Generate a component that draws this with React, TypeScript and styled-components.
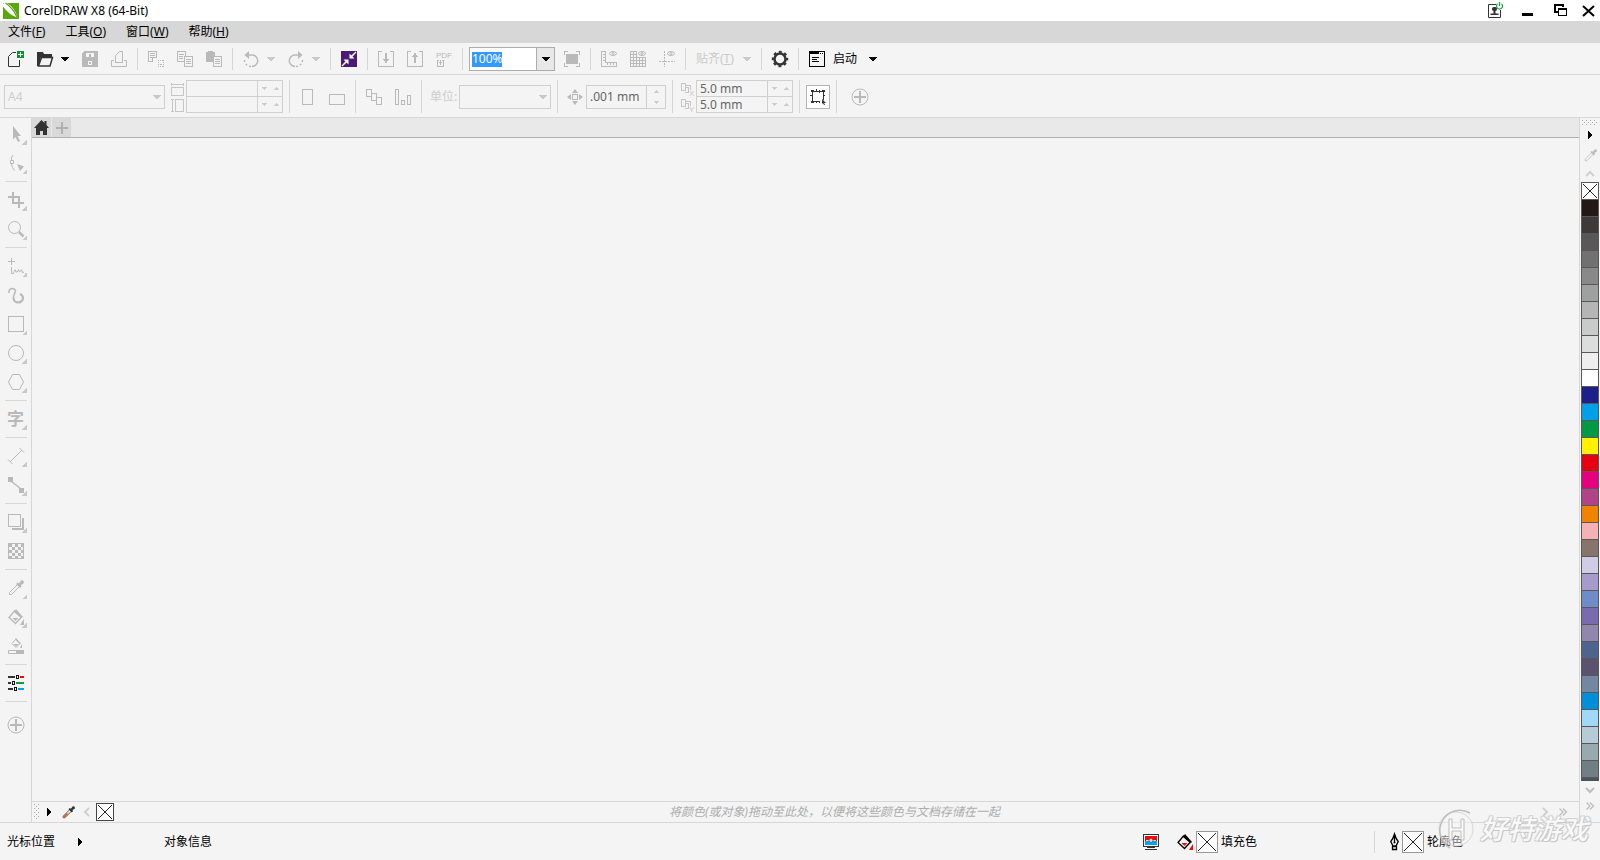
import React from 'react';
import styled, { createGlobalStyle, css } from 'styled-components';

const line = '#d7d7d7';
const face = '#f4f4f4';
const dim = '#b9b9b9';
const ink = '#333333';

const GlobalStyle = createGlobalStyle`
  * { box-sizing: border-box; }
  body { margin: 0; background: ${face}; }
  body, button, input, select {
    font-family: "Noto Sans", "Noto Sans CJK SC", sans-serif;
    font-size: 12px;
    line-height: 16px;
  }
  button { border: 0; padding: 0; margin: 0; background: none; color: inherit; }
  svg { display: block; flex: none; overflow: visible; }
`;

/* ---------- icons ---------- */

type IconProps = { children: React.ReactNode; w?: number; h?: number; soft?: boolean };

const Icon = ({ children, w = 16, h = 16, soft = false }: IconProps) => (
  <svg
    width={w}
    height={h}
    viewBox={`0 0 ${w} ${h}`}
    fill="none"
    stroke="currentColor"
    shapeRendering={soft ? 'auto' : 'crispEdges'}
    aria-hidden="true"
  >
    {children}
  </svg>
);

const solid = { fill: 'currentColor', stroke: 'none' };

const CaretDown = ({ small = false }: { small?: boolean }) =>
  small ? (
    <Icon w={5} h={3}><path {...solid} d="M0 0h5v1h-1v1h-1v1h-1v-1h-1v-1h-1z" /></Icon>
  ) : (
    <Icon w={8} h={4}><path {...solid} d="M0 0h8v1h-1v1h-1v1h-1v1h-2v-1h-1v-1h-1v-1h-1z" /></Icon>
  );
const CaretUp = () => (
  <Icon w={5} h={3}><path {...solid} d="M0 3h5v-1h-1v-1h-1v-1h-1v1h-1v1h-1z" /></Icon>
);
const CaretRight = () => (
  <Icon w={4} h={8}><path {...solid} d="M0 0h1v1h1v1h1v1h1v2h-1v1h-1v1h-1v1h-1z" /></Icon>
);

const Grip = ({ w, h }: { w: number; h: number }) => {
  const dots: React.ReactNode[] = [];
  for (let y = 0; y < h; y += 2) {
    for (let x = y % 4; x < w; x += 4) {
      dots.push(<rect key={`${x}-${y}`} x={x} y={y} width="1" height="1" fill="#a8a8a8" stroke="none" />);
    }
  }
  return <Icon w={w} h={h}>{dots}</Icon>;
};

const NewIcon = () => (
  <Icon>
    <path d="M8 1.5H4.5L.5 5.5V15.5H11.5V9" shapeRendering="auto" />
    <rect x="9" y="0" width="7" height="7" fill="#0a9132" stroke="none" />
    <path d="M12.5 1v5M10 3.5h5" stroke="#fff" />
  </Icon>
);
const OpenIcon = () => (
  <Icon soft>
    <path {...solid} d="M0 1h6l1 2h8v4h-2v-1h-9l-2 9h-2z" />
    <path d="M4.5 6.5H15.5L13 15H1.5Z" strokeWidth="1.5" fill={face} />
  </Icon>
);
const SaveIcon = () => (
  <Icon>
    <path {...solid} d="M2 0h14v16H0V2z" />
    <path d="M4 2h8v4H4zM6 10h4v4H6z" fill={face} stroke="none" />
    <path {...solid} d="M7 3h2v3H7z" />
    <path {...solid} d="M7 11h2v2H7z" />
  </Icon>
);
const PrintIcon = () => (
  <Icon>
    <path d="M4.5 11V4.5L8.5 .5H11.5V11M3 9.5H.5V15.5H15.5V9.5H13M4 11.5h8" shapeRendering="auto" />
  </Icon>
);
const CutIcon = () => (
  <Icon>
    <path d="M.5.5h8v6h-4v4h-4zM2 2.5h5M2 4.5h5M2 6.5h2" />
    <path d="M10 9.500h6M10 15.500h6M10.500 9v7M15.500 9v7" strokeDasharray="1 1" />
    <path d="M12 13.500h2" />
  </Icon>
);
const CopyIcon = () => (
  <Icon>
    <path d="M.5.5h8v10h-8zM2 3.5h5M2 5.5h4M2 7.5h4" />
    <path d="M7.5 5.5h8v10h-8z" fill={face} />
    <path d="M9 8.5h5M9 10.5h5M9 12.5h5" />
  </Icon>
);
const PasteIcon = () => (
  <Icon>
    <path {...solid} d="M0 1h2v-1h5v1h2v10H0z" />
    <path d="M7.5 5.5h8v10h-8z" fill={face} />
    <path d="M9 8.5h5M9 10.5h5M9 12.5h5" />
  </Icon>
);
const UndoIcon = () => (
  <Icon soft>
    <path d="M4 4H9A5.700 5.700 0 0 1 9 15.400" strokeWidth="1.500" />
    <path d="M8 15.400A6.500 6.500 0 0 1 1.500 8" strokeWidth="1.500" strokeDasharray="2 2" />
    <path {...solid} d="M6 0v8L1.500 4z" />
  </Icon>
);
const RedoIcon = () => (
  <Icon soft>
    <path d="M12 4H7A5.700 5.700 0 0 0 7 15.400" strokeWidth="1.500" />
    <path d="M8 15.400A6.500 6.500 0 0 0 14.500 8" strokeWidth="1.500" strokeDasharray="2 2" />
    <path {...solid} d="M10 0v8L14.500 4z" />
  </Icon>
);
const ConnectIcon = () => (
  <Icon soft>
    <rect width="16" height="16" fill="#4b1a77" stroke="none" />
    <path d="M1 15L6 10M15 1L10 6" stroke="#fff" strokeWidth="1.500" />
    <path d="M2.500 8.500H7.500V13.500ZM8.500 2.500V7.500H13.500Z" fill="#fff" stroke="none" />
  </Icon>
);
const ImportIcon = () => (
  <Icon>
    <path d="M4 .5H.5V15.5H15.5V.5H12" />
    <path {...solid} d="M7 2h2v6h2v1h-1v1h-1v2h-2v-2h-1v-1h-1v-1h2z" />
  </Icon>
);
const ExportIcon = () => (
  <Icon>
    <path d="M4 .5H.5V15.5H15.5V.5H12" />
    <path {...solid} d="M7 12h2V6h2V5h-1V4h-1V2h-2v2h-1v1h-1v1h2z" />
  </Icon>
);
const PdfIcon = () => (
  <Icon>
    <text x="0" y="7" {...solid} fontSize="8" fontFamily="Liberation Sans, sans-serif">PDF</text>
    <path d="M3 9.500H1.500V15.500H7.500V9.500H6M4.500 9v5M3 11.500h3" />
  </Icon>
);
const FullScreenIcon = () => (
  <Icon>
    <path {...solid} d="M2 3h12v10H2z" />
    <path d="M0 .5h4M.5 0v4M12 .5h4M15.500 0v4M0 15.500h4M.5 12v4M12 15.500h4M15.500 12v4" />
  </Icon>
);
const Eye = () => (
  <g shapeRendering="auto"><ellipse cx="12" cy="2.500" rx="3.500" ry="2" /><circle cx="12" cy="2.500" r="1" /></g>
);
const RulerIcon = () => (
  <Icon>
    <path d="M.5 .5H4.500V11.500H15.500V15.500H.5ZM2 3.500h2M2 6.500h2M2 9.500h2M6.500 12v2M9.500 12v2M12.500 12v2" />
    <Eye />
  </Icon>
);
const GridIcon = () => (
  <Icon>
    <path d="M.5 0v16M3.500 0v16M6.500 0v16M9.500 6v10M12.500 6v10M15.500 6v10M0 .5h7M0 3.500h7M0 6.500h16M0 9.500h16M0 12.500h16M0 15.500h16" />
    <Eye />
  </Icon>
);
const GuidesIcon = () => (
  <Icon>
    <path d="M5.500 0v16M0 10.500h16" strokeDasharray="2 1" />
    <Eye />
  </Icon>
);
const GearIcon = () => (
  <Icon soft>
    <circle cx="8" cy="8" r="5.500" strokeWidth="2.500" />
    <circle cx="8" cy="8" r="7.200" strokeWidth="2" strokeDasharray="2.830 2.830" strokeDashoffset="1.400" />
  </Icon>
);
const LaunchIcon = () => (
  <Icon>
    <path d="M.5.5h15v15h-15zM0 2.500h10M11 2.500h1M13 2.500h1M3 6.500h7M3 8.500h5M3 10.500h7" />
    <path d="M0 1.500h10" />
  </Icon>
);
const WidthIcon = () => (
  <Icon w={13} h={13}><path d="M0 1.500h13M.5 0v3M12.500 0v3M.5 4.500h12v8h-12z" /></Icon>
);
const HeightIcon = () => (
  <Icon w={13} h={13}><path d="M1.500 0v13M0 .5h3M0 12.500h3M4.500.5h8v12h-8z" /></Icon>
);
const PortraitIcon = () => <Icon><path d="M2.500.5h10v15h-10z" /></Icon>;
const LandscapeIcon = () => <Icon><path d="M.5 5.500h15v10h-15z" /></Icon>;
const PagesIcon = () => (
  <Icon>
    <path d="M.5.5h5v7h-5z" />
    <path d="M5.500 4.500h5v7h-5zM10.500 8.500h5v7h-5z" fill={face} />
  </Icon>
);
const PageSizesIcon = () => <Icon><path d="M.5.5h3v15h-3zM6.500 11.500h3v4h-3zM12.500 6.500h3v9h-3z" /></Icon>;
const NudgeIcon = () => (
  <Icon>
    <path d="M5.500 5.500h5v5h-5z" />
    <path {...solid} shapeRendering="auto" d="M8 0l3 4H5zM8 16l3-4H5zM0 8l4-3v6zM16 8l-4-3v6z" />
  </Icon>
);
const OffsetIcon = ({ axis }: { axis: string }) => (
  <Icon w={13} h={13}>
    <path d="M.5.5h4v7h-4zM5 2.500h4.500V7M4 9.500h3.500V4.500H5" />
    <text x="8" y="13" {...solid} fontSize="8" fontFamily="Liberation Sans, sans-serif">{axis}</text>
  </Icon>
);
const BoundsIcon = () => (
  <Icon>
    <path d="M2.500 2.500h11v8M10 12.500H2.500V2.500" />
    <path {...solid} d="M1 1h3v1h-1v1h-2zM12 1h3v2h-2v-1h-1zM1 12h2v1h1v1h-3zM6 0h1v2h-1zM9 1h1v3h-1zM6 12h1v2h-1zM9 12h1v2h-1zM0 6h2v1h-2zM13 6h2v1h-2z" />
    <path {...solid} shapeRendering="auto" d="M12 10l4 4h-2l1 2h-1l-1-2-1 1z" />
  </Icon>
);
const PlusCircleIcon = () => (
  <Icon w={18} h={18} soft>
    <circle cx="9" cy="9" r="8" />
    <path d="M9 3v12M3 9h12" strokeWidth="2" />
  </Icon>
);
const HomeIcon = () => (
  <Icon w={15} h={15} soft><path {...solid} d="M7.500 0l3 3v-2h2v4l2.500 3h-2v7H9v-4H6v4H2V8H0z" /></Icon>
);
const TabPlusIcon = () => <Icon w={12} h={12}><path d="M6 0v12M0 6h12" strokeWidth="2" /></Icon>;

const PickIcon = () => <Icon soft><path {...solid} d="M5 0L13 10H9.500L12 15L10 16L7.500 11L5 13.500Z" /></Icon>;
const ShapeIcon = () => (
  <Icon soft>
    <path d="M5 0Q3 2 3.500 5M3.500 9Q4 13 6.500 15.500" />
    <path d="M2.500 5.500h3v3h-3z" fill={face} />
    <path {...solid} d="M9 9L16 11.500L12 16Z" />
  </Icon>
);
const CropIcon = () => <Icon><path d="M5 0v11h11M0 5h11v11" strokeWidth="2" /></Icon>;
const ZoomIcon = () => (
  <Icon soft><circle cx="6.500" cy="6.500" r="6" /><path d="M11 11l4.500 4.500" strokeWidth="2.500" /></Icon>
);
const FreehandIcon = () => (
  <Icon soft>
    <path d="M3.500 0v7M0 3.500h7" />
    <path d="M3.500 9v6.500h2q1-5 2-3.500q0 3 1.500 2t1.500-2.500q1 4 2 1.500t1.500 0q0 3 2 1" />
  </Icon>
);
const ArtisticIcon = () => (
  <Icon soft>
    <path d="M1 6V4A3.500 3.500 0 0 1 7.500 3.500C7.500 6 5 8 5.500 11" strokeWidth="1.500" />
    <path d="M5.500 11A4.600 4.300 0 0 0 15 11Q15 8.500 12 7" strokeWidth="2.200" />
  </Icon>
);
const RectIcon = () => <Icon><path d="M.5.5h15v15h-15z" /></Icon>;
const EllipseIcon = () => <Icon soft><circle cx="8" cy="8" r="7.500" /></Icon>;
const PolygonIcon = () => <Icon soft><path d="M4.500.5h7L15.500 8l-4 7.500h-7L.5 8z" /></Icon>;
const DimensionIcon = () => (
  <Icon soft><path d="M2 14L14 2M0 11.500l4.500 4.500M11.500 0l4.500 4.500" /></Icon>
);
const ConnectorIcon = () => (
  <Icon soft><path {...solid} d="M0 0h5v5H0zM11 11h5v5h-5z" /><path d="M3 4l10 8" strokeWidth="1.500" /></Icon>
);
const ShadowIcon = () => (
  <Icon><path d="M.5.5h12v12h-12z" /><path {...solid} d="M14 4h2v12H4v-2h10z" /></Icon>
);
const CheckerIcon = () => (
  <Icon>
    <path d="M.5.5h15v15h-15z" />
    {[0, 1, 2, 3, 4].flatMap(r =>
      [0, 1, 2, 3, 4].map(c =>
        (r + c) % 2 === 0 ? <rect key={`${r}${c}`} {...solid} x={c * 3 + 1} y={r * 3 + 1} width="3" height="3" /> : null,
      ),
    )}
  </Icon>
);
const DropperIcon = ({ tip, size = 16 }: { tip?: string; size?: number }) => (
  <svg width={size} height={size} viewBox="0 0 16 16" fill="none" stroke="currentColor" aria-hidden="true">
    <path d="M9.500 4.500L1.500 12.500V14.500H3.500L11.500 6.500" />
    {tip && <path d="M6 9L2 13v1h1l4-4z" fill={tip} stroke={tip} />}
    <path {...solid} d="M8 4l1.500-1.500L11 3.500l2-3Q16-.5 16 3l-3 2 .500 1.500L12 8z" />
  </svg>
);
const BucketIcon = ({ color, size = 16 }: { color?: string; size?: number }) => (
  <svg width={size} height={size} viewBox="0 0 16 16" fill="none" stroke="currentColor" aria-hidden="true">
    <path d="M6.500 2L1 8.500 7.500 14.500 13.500 8Z" strokeWidth="1.300" />
    <path {...solid} d="M6 3L8 0l7 8-2 1z" />
    <path d="M4.500 9h6l-3 3z" fill={color || 'currentColor'} stroke="none" />
    <path d="M16 10v6h-4z" fill={color || 'currentColor'} stroke="none" />
  </svg>
);
const SmartFillIcon = () => (
  <Icon soft>
    <path d="M7.500 1.500L4 5.500 8 9.500 12 5.500Z" />
    <path {...solid} d="M7 1l1-1 5 5.500-1 .5zM5.500 6h5L8 8.500zM14 6v4h-2z" />
    <path d="M.5 12.500h15v3H.5z" />
    <path {...solid} d="M8 12h8v4H8z" />
  </Icon>
);
const SlidersIcon = () => (
  <Icon>
    <path d="M0 2h7M0 8h3M0 14h5" stroke={ink} strokeWidth="2" />
    <path d="M8.500.5h2v3h-2zM4.500 6.500h2v3h-2zM6.500 12.500h2v3h-2z" stroke="#111" />
    <path d="M12 2h4" stroke="#f00" strokeWidth="2" />
    <path d="M8 8h8" stroke="#0aa034" strokeWidth="2" />
    <path d="M10 14h6" stroke="#00a5f5" strokeWidth="2" />
  </Icon>
);
const MonitorIcon = () => (
  <Icon>
    <path d="M.5.5h15v12h-15z" fill="#fff" stroke="#333" />
    <path d="M2 2h12v5H2z" fill="#f00" stroke="none" />
    <path d="M2 7h12v4H2z" fill="#00a5f5" stroke="none" />
    <path d="M4 13.500h8M2 15.500h12" stroke="#333" />
    <path d="M3 6.500h10" stroke="#ddd" />
    <circle cx="8" cy="6.500" r="2" fill="#ddd" stroke="#666" shapeRendering="auto" />
  </Icon>
);
const PenIcon = () => (
  <Icon w={9} soft>
    <path d="M4.500 0Q3 5 .8 7.500L3 12H6L8.200 7.500Q6 5 4.500 0ZM4.500 2v7M2.500 12.500h4v3h-4z" strokeWidth="1.300" />
    <circle cx="4.500" cy="8.500" r="1" {...solid} />
  </Icon>
);
const LogoIcon = () => (
  <Icon soft>
    <rect width="16" height="16" fill="#58a80d" stroke="none" />
    <path d="M1 0H4Q12 5 14.500 14.500Q6 12 0 3.500V1Z" fill="#fff" stroke="none" />
    <path d="M2.500 0Q10 5 14 14" stroke="#58a80d" strokeWidth="1.200" />
  </Icon>
);
const UserIcon = () => (
  <Icon soft>
    <path d="M9 1.500H1.500V14.500H13.500V7" stroke="#333" />
    <path d="M7.500 4a2 2 0 0 1 1 4v2.500h3V12h-8v-1.500h3V8a2 2 0 0 1 1-4z" fill="#333" stroke="none" />
    <path d="M10.500 .8A3 3 0 1 0 14.500 .8M12.500 -1v4" stroke="#20a84e" strokeWidth="1.300" />
  </Icon>
);
const MinimizeIcon = () => <Icon w={11}><path {...solid} d="M0 10h11v3H0z" /></Icon>;
const RestoreIcon = () => (
  <Icon w={13}><path d="M1 9V2h8v2M0 9h4" strokeWidth="2" /><path d="M4.500 5.500h8v7h-8z" fill="#fff" /><path d="M4 5.500h9" strokeWidth="2" /></Icon>
);
const CloseIcon = () => <Icon w={13} soft><path d="M1 3l11 10M12 3L1 13" strokeWidth="2" /></Icon>;
const Chevron = ({ turn }: { turn: 'up' | 'down' | 'left' | 'right' }) => {
  const d = { up: 'M1 7l4-4 4 4', down: 'M1 3l4 4 4-4', left: 'M7 1L3 5l4 4', right: 'M3 1l4 4-4 4' }[turn];
  return <Icon w={10} h={10} soft><path d={d} strokeWidth="2" /></Icon>;
};
const DoubleChevron = () => <Icon w={8} h={8} soft><path d="M.5.5L4 4 .5 7.500M4 .5L7.500 4 4 7.500" strokeWidth="1.300" /></Icon>;

/* ---------- shared parts ---------- */

const Shell = styled.div`
  display: flex;
  flex-direction: column;
  min-height: 100vh;
  background: ${face};
  color: #000;
`;
const TitleBar = styled.header`
  display: flex;
  align-items: center;
  height: 21px;
  padding-left: 3px;
  background: #fff;
`;
const AppName = styled.h1`
  flex: 1;
  margin: 0 0 0 5px;
  font-size: 12px;
  font-weight: 400;
`;
const WindowButtons = styled.div`
  display: flex;
  align-items: center;
  button { display: grid; place-items: center; width: 33px; height: 20px; }
  button:last-child { width: 23px; }
`;
const MenuBar = styled.nav`
  display: flex;
  gap: 20px;
  height: 22px;
  align-items: center;
  padding: 0 8px;
  background: #d7d7d7;
`;
const MenuItem = styled.button`
  white-space: nowrap;
`;
const ToolBar = styled.div`
  display: flex;
  align-items: center;
  gap: 1px;
  height: 32px;
  padding: 1px 2px 0;
  border-bottom: 1px solid ${line};
`;
const ToolButton = styled.button<{ $tone?: string }>`
  display: flex;
  flex: none;
  align-items: center;
  justify-content: center;
  width: 28px;
  height: 28px;
  color: ${p => p.$tone || dim};
`;
const DropButton = styled.button<{ $tone?: string }>`
  display: flex;
  align-items: center;
  width: 15px;
  height: 28px;
  padding-left: 1px;
  color: ${p => p.$tone || '#c9c9c9'};
`;
const WideButton = styled.button<{ $gap: number; $tone: string }>`
  display: flex;
  align-items: center;
  gap: ${p => p.$gap}px;
  height: 28px;
  padding: 0 6px;
  white-space: nowrap;
  color: ${p => p.$tone};
`;
const LaunchLabel = styled.span`
  margin-right: 4px;
`;
const Divider = styled.span`
  flex: none;
  width: 1px;
  height: 22px;
  margin: 0 3px;
  background: ${line};
`;
const PropertyBar = styled(ToolBar)`
  gap: 0;
  height: 43px;
  padding: 2px 4px 0;
  ${Divider} { height: 33px; margin: 0 4px 1px; }
  ${ToolButton} + ${ToolButton} { margin-left: 1px; }
`;
const ZoomBox = styled.div`
  display: flex;
  width: 86px;
  height: 24px;
  margin: 0 2px;
  border: 1px solid #adadad;
  background: #fff;
`;
const ZoomField = styled.div`
  flex: 1;
  display: flex;
  align-items: center;
  padding-left: 2px;
`;
const ZoomInput = styled.input`
  width: 30px;
  height: 15px;
  padding: 0;
  border: 0;
  outline: 0;
  background: #3399ff;
  color: #fff;
`;
const ZoomDrop = styled.button`
  display: flex;
  align-items: center;
  justify-content: center;
  width: 18px;
  border-left: 1px solid #adadad;
  background: #e8e8e8;
`;
const SelectBox = styled.div<{ $width: number }>`
  display: grid;
  align-items: center;
  width: ${p => p.$width}px;
  height: 24px;
  margin-right: 2px;
  border: 1px solid #cfcfcf;
  color: #c9c9c9;
  > * { grid-area: 1 / 1; }
  > svg { justify-self: end; margin-right: 3px; pointer-events: none; }
`;
const Select = styled.select`
  width: 100%;
  height: 22px;
  padding: 0 3px;
  border: 0;
  appearance: none;
  background: none;
  color: #cdcdcd;
  opacity: 1;
`;
const IconStack = styled.div`
  display: grid;
  gap: 3px;
  margin: 0 2px 0 4px;
  color: #c6c6c6;
`;
const Spinners = styled.div`
  width: 97px;
  height: 33px;
  margin: 0 2px 1px 0;
  border: 1px solid #cfcfcf;
`;
const SpinRow = styled.div`
  display: flex;
  align-items: end;
  height: 15px;
  & + & { height: 16px; border-top: 1px solid #cfcfcf; }
`;
const SpinInput = styled.input`
  flex: 1;
  min-width: 0;
  height: 14px;
  padding: 0 3px;
  border: 0;
  background: none;
  color: #666;
`;
const StepPair = styled.div`
  display: flex;
  width: 25px;
  height: 15px;
  border-left: 1px solid #cfcfcf;
  color: #cdcdcd;
  button { flex: 1; display: grid; place-items: center; }
`;
const NudgeBox = styled.div`
  display: flex;
  align-items: center;
  width: 80px;
  height: 24px;
  margin: 0 2px 0 3px;
  border: 1px solid #cfcfcf;
`;
const StepColumn = styled.div`
  display: grid;
  width: 19px;
  height: 22px;
  border-left: 1px solid #cfcfcf;
  color: #cdcdcd;
  button { display: grid; place-items: center; }
`;
const UnitLabel = styled.label`
  width: 29px;
  margin-left: 4px;
  white-space: nowrap;
  color: #cdcdcd;
`;
const Indent = styled.div`
  margin-left: 5px;
  color: ${dim};
`;
const PressedButton = styled(ToolButton)`
  width: 24px;
  height: 24px;
  margin: 0 2px;
  border: 1px solid #b4b4b4;
  background: #fff;
`;

/* ---------- workspace ---------- */

const Workspace = styled.div`
  display: flex;
  flex: 1;
  min-height: 0;
`;
const ToolBox = styled.aside`
  display: flex;
  flex: none;
  flex-direction: column;
  align-items: center;
  gap: 1px;
  width: 32px;
  padding-top: 2px;
  border-right: 1px solid ${line};
`;
const ToolRule = styled.span`
  width: 22px;
  height: 1px;
  margin: 3px 0;
  background: ${line};
`;
const BoxTool = styled(ToolButton)<{ $flyout?: boolean; $last?: boolean }>`
  position: relative;
  ${p => p.$last && css`margin-top: 5px;`}
  ${p =>
    p.$flyout &&
    css`
      &::after {
        content: '';
        position: absolute;
        right: 3px;
        bottom: 3px;
        width: 5px;
        height: 5px;
        background: linear-gradient(135deg, transparent 50%, #c9c9c9 50%);
      }
    `}
`;
const TextGlyph = styled.span`
  font-size: 17px;
  font-weight: 700;
  line-height: 20px;
`;
const Stage = styled.main`
  display: flex;
  flex: 1;
  flex-direction: column;
  min-width: 0;
`;
const TabStrip = styled.div`
  display: flex;
  gap: 1px;
  height: 20px;
  border-bottom: 1px solid #b0b0b0;
  background: #e9e9e9;
`;
const Tab = styled.button<{ $tone: string }>`
  display: grid;
  place-items: center;
  width: 19px;
  background: #d9d9d9;
  color: ${p => p.$tone};
`;
const Canvas = styled.section`
  flex: 1;
`;
const DocPalette = styled.div`
  display: flex;
  align-items: center;
  height: 21px;
  padding: 0 8px 0 2px;
  border-top: 1px solid ${line};
  color: #c4c4c4;
`;
const PaletteButton = styled.button<{ $tone?: string; $w?: number; $h?: number }>`
  display: flex;
  flex: none;
  align-items: center;
  justify-content: center;
  width: ${p => p.$w || 20}px;
  height: ${p => p.$h || 18}px;
  color: ${p => p.$tone || '#bdbdbd'};
`;
const NoColor = styled.button<{ $size: number; $edge: string }>`
  flex: none;
  display: grid;
  place-items: center;
  width: ${p => p.$size}px;
  height: ${p => p.$size}px;
  border: 1px solid ${p => p.$edge};
  background: #fff;
  color: #222;
`;
const DropHint = styled.p`
  flex: 1;
  margin: 0;
  padding-left: 20px;
  text-align: center;
  font-style: italic;
  color: #adadad;
`;
const ColorPalette = styled.aside`
  display: flex;
  flex: none;
  flex-direction: column;
  align-items: center;
  width: 21px;
  padding: 2px 0 9px;
  border-left: 1px solid ${line};
`;
const SwatchList = styled.div`
  flex: 1 1 0;
  width: 18px;
  min-height: 0;
  overflow: hidden;
`;
const Swatch = styled.button<{ $color: string }>`
  display: block;
  width: 18px;
  height: 17px;
  border: 1px solid #595757;
  border-top: 0;
  background: ${p => p.$color};
`;

/* ---------- status ---------- */

const StatusBar = styled.footer`
  position: relative;
  display: flex;
  align-items: center;
  height: 38px;
  padding: 0 137px 0 7px;
  border-top: 1px solid ${line};
`;
const StatusText = styled.span<{ $width?: number }>`
  width: ${p => (p.$width ? `${p.$width}px` : 'auto')};
  white-space: nowrap;
`;
const Spacer = styled.span`
  flex: 1;
`;
const StatusGroup = styled.div<{ $width?: number; $indent?: number }>`
  display: flex;
  align-items: center;
  gap: 3px;
  width: ${p => (p.$width ? `${p.$width}px` : 'auto')};
  padding-left: ${p => p.$indent || 0}px;
`;
const Watermark = styled.div`
  position: absolute;
  right: 12px;
  bottom: 9px;
  display: flex;
  align-items: center;
  gap: 4px;
  pointer-events: none;
  color: #f8f8f8;
`;
const WatermarkText = styled.span`
  font-size: 27px;
  font-weight: 500;
  line-height: 30px;
  font-style: italic;
  text-shadow: 1px 1px 0 #c6c6c6, -1px -1px 0 #d2d2d2, 1px -1px 0 #d2d2d2, -1px 1px 0 #d2d2d2;
`;
const WatermarkLogo = () => (
  <svg width="40" height="44" viewBox="0 0 40 44" fill="none" aria-hidden="true">
    <circle cx="20" cy="22" r="17" fill="#f6f6f6" fillOpacity=".5" stroke="#d6d6d6" />
    <path d="M34 6A19 19 0 1 0 14 41" stroke="#bdbdbd" strokeWidth="1.500" />
    <path d="M13 12h3v9h9v-9h3v21h-3v-9h-9v9h-3z" fill="#fafafa" stroke="#bdbdbd" />
  </svg>
);

const menus = [['文件', 'F'], ['工具', 'O'], ['窗口', 'W'], ['帮助', 'H']];

const colors = [
  '#231815', '#3e3a39', '#595757', '#727171', '#898989', '#9fa0a0', '#b5b5b6', '#c9caca', '#dcdddd', '#efefef',
  '#ffffff', '#1d2088', '#00a0e9', '#009944', '#fff100', '#e60012', '#e4007f', '#b04486', '#f08300', '#f5b2b2',
  '#87756b', '#d0cce5', '#a69bcb', '#6f8cc8', '#796bae', '#9186ad', '#4d648e', '#5b5270', '#7387a1', '#008fd8',
  '#9fd9f6', '#b5ccd8', '#98aab0', '#707e85', '#4a5459', '#3a4347', '#2a3033',
];

type Tool = { name: string; icon: React.ReactNode; flyout?: boolean; last?: boolean };

const toolGroups: Tool[][] = [
  [{ name: '选择', icon: <PickIcon />, flyout: true }, { name: '形状', icon: <ShapeIcon />, flyout: true }],
  [{ name: '裁剪', icon: <CropIcon />, flyout: true }, { name: '缩放', icon: <ZoomIcon />, flyout: true }],
  [
    { name: '手绘', icon: <FreehandIcon />, flyout: true },
    { name: '艺术笔', icon: <ArtisticIcon /> },
    { name: '矩形', icon: <RectIcon />, flyout: true },
    { name: '椭圆形', icon: <EllipseIcon />, flyout: true },
    { name: '多边形', icon: <PolygonIcon />, flyout: true },
  ],
  [{ name: '文本', icon: <TextGlyph>字</TextGlyph>, flyout: true }],
  [{ name: '度量', icon: <DimensionIcon />, flyout: true }, { name: '连接器', icon: <ConnectorIcon />, flyout: true }],
  [{ name: '阴影', icon: <ShadowIcon />, flyout: true }, { name: '透明度', icon: <CheckerIcon /> }],
  [
    { name: '滴管', icon: <DropperIcon />, flyout: true },
    { name: '填充', icon: <BucketIcon />, flyout: true },
    { name: '智能填充', icon: <SmartFillIcon /> },
  ],
  [{ name: '轮廓', icon: <SlidersIcon /> }],
  [{ name: '自定义', icon: <PlusCircleIcon />, last: true }],
];

const Cross = ({ size }: { size: number }) => (
  <Icon w={size} h={size} soft>
    <path d={`M1 1L${size - 1} ${size - 1}M${size - 1} 1L1 ${size - 1}`} />
  </Icon>
);

const SpinPair = ({ label, value }: { label: string; value: string }) => (
  <Spinners>
    {['X', 'Y'].map(axis => (
      <SpinRow key={axis}>
        <SpinInput aria-label={`${label} ${axis}`} defaultValue={value} />
        <StepPair>
          <button aria-label="减小"><CaretDown small /></button>
          <button aria-label="增大"><CaretUp /></button>
        </StepPair>
      </SpinRow>
    ))}
  </Spinners>
);

export default function App() {
  return (
    <Shell>
      <GlobalStyle />
      <TitleBar>
        <LogoIcon />
        <AppName>CorelDRAW X8 (64-Bit)</AppName>
        <WindowButtons>
          <button aria-label="账户"><UserIcon /></button>
          <button aria-label="最小化"><MinimizeIcon /></button>
          <button aria-label="还原"><RestoreIcon /></button>
          <button aria-label="关闭"><CloseIcon /></button>
        </WindowButtons>
      </TitleBar>
      <MenuBar>
        {menus.map(([name, key]) => (
          <MenuItem key={key}>{name}(<u>{key}</u>)</MenuItem>
        ))}
      </MenuBar>

      <ToolBar>
        <ToolButton $tone={ink} aria-label="新建"><NewIcon /></ToolButton>
        <ToolButton $tone={ink} aria-label="打开"><OpenIcon /></ToolButton>
        <DropButton $tone="#000" aria-label="最近文件"><CaretDown /></DropButton>
        <ToolButton aria-label="保存"><SaveIcon /></ToolButton>
        <ToolButton aria-label="打印"><PrintIcon /></ToolButton>
        <Divider />
        <ToolButton aria-label="剪切"><CutIcon /></ToolButton>
        <ToolButton aria-label="复制"><CopyIcon /></ToolButton>
        <ToolButton aria-label="粘贴"><PasteIcon /></ToolButton>
        <Divider />
        <ToolButton aria-label="撤消"><UndoIcon /></ToolButton>
        <DropButton aria-label="撤消列表"><CaretDown /></DropButton>
        <ToolButton aria-label="重做"><RedoIcon /></ToolButton>
        <DropButton aria-label="重做列表"><CaretDown /></DropButton>
        <Divider />
        <ToolButton aria-label="搜索内容"><ConnectIcon /></ToolButton>
        <Divider />
        <ToolButton aria-label="导入"><ImportIcon /></ToolButton>
        <ToolButton aria-label="导出"><ExportIcon /></ToolButton>
        <ToolButton aria-label="发布为 PDF"><PdfIcon /></ToolButton>
        <Divider />
        <ZoomBox>
          <ZoomField><ZoomInput aria-label="缩放级别" defaultValue="100%" /></ZoomField>
          <ZoomDrop aria-label="缩放列表"><CaretDown /></ZoomDrop>
        </ZoomBox>
        <ToolButton aria-label="全屏预览"><FullScreenIcon /></ToolButton>
        <Divider />
        <ToolButton aria-label="标尺"><RulerIcon /></ToolButton>
        <ToolButton aria-label="网格"><GridIcon /></ToolButton>
        <ToolButton aria-label="辅助线"><GuidesIcon /></ToolButton>
        <Divider />
        <WideButton $gap={9} $tone="#c9c9c9"><span>贴齐(<u>T</u>)</span><CaretDown /></WideButton>
        <Divider />
        <ToolButton $tone={ink} aria-label="选项"><GearIcon /></ToolButton>
        <Divider />
        <WideButton $gap={8} $tone="#000"><LaunchIcon /><LaunchLabel>启动</LaunchLabel><CaretDown /></WideButton>
      </ToolBar>

      <PropertyBar>
        <SelectBox $width={161}>
          <Select aria-label="页面大小" disabled><option>A4</option></Select>
          <CaretDown />
        </SelectBox>
        <IconStack><WidthIcon /><HeightIcon /></IconStack>
        <SpinPair label="页面度量" value="" />
        <Divider />
        <ToolButton aria-label="纵向"><PortraitIcon /></ToolButton>
        <ToolButton aria-label="横向"><LandscapeIcon /></ToolButton>
        <Divider />
        <ToolButton aria-label="所有页面"><PagesIcon /></ToolButton>
        <ToolButton aria-label="当前页面"><PageSizesIcon /></ToolButton>
        <Divider />
        <UnitLabel htmlFor="unit">单位:</UnitLabel>
        <SelectBox $width={92}>
          <Select id="unit" disabled><option> </option></Select>
          <CaretDown />
        </SelectBox>
        <Divider />
        <Indent><NudgeIcon /></Indent>
        <NudgeBox>
          <SpinInput aria-label="微调距离" defaultValue=".001 mm" />
          <StepColumn>
            <button aria-label="增大"><CaretUp /></button>
            <button aria-label="减小"><CaretDown small /></button>
          </StepColumn>
        </NudgeBox>
        <Divider />
        <IconStack><OffsetIcon axis="X" /><OffsetIcon axis="Y" /></IconStack>
        <SpinPair label="再制距离" value="5.0 mm" />
        <Divider />
        <PressedButton $tone={ink} aria-label="视为已填充"><BoundsIcon /></PressedButton>
        <Divider />
        <Indent><ToolButton aria-label="快速自定义"><PlusCircleIcon /></ToolButton></Indent>
      </PropertyBar>

      <Workspace>
        <ToolBox>
          {toolGroups.map((group, i) => (
            <React.Fragment key={i}>
              {i > 0 && <ToolRule />}
              {group.map(t => (
                <BoxTool key={t.name} aria-label={t.name} $flyout={t.flyout} $last={t.last}>{t.icon}</BoxTool>
              ))}
            </React.Fragment>
          ))}
        </ToolBox>
        <Stage>
          <TabStrip>
            <Tab $tone={ink} aria-label="欢迎屏幕"><HomeIcon /></Tab>
            <Tab $tone="#b0b0b0" aria-label="新标签"><TabPlusIcon /></Tab>
          </TabStrip>
          <Canvas />
          <DocPalette>
            <Grip w={6} h={16} />
            <PaletteButton $w={18} $tone="#000" aria-label="文档调色板"><CaretRight /></PaletteButton>
            <PaletteButton $tone={ink} aria-label="颜色滴管"><DropperIcon tip="#d2691e" size={13} /></PaletteButton>
            <PaletteButton $w={18} $tone="#d0d0d0" aria-label="向左滚动"><Chevron turn="left" /></PaletteButton>
            <NoColor $size={18} $edge="#444" aria-label="无颜色"><Cross size={16} /></NoColor>
            <DropHint>将颜色(或对象)拖动至此处，以便将这些颜色与文档存储在一起</DropHint>
            <PaletteButton $tone="#d0d0d0" aria-label="向右滚动"><Chevron turn="right" /></PaletteButton>
            <PaletteButton $w={16} aria-label="展开"><DoubleChevron /></PaletteButton>
          </DocPalette>
        </Stage>
        <ColorPalette>
          <Grip w={16} h={6} />
          <PaletteButton $tone="#000" aria-label="调色板菜单"><CaretRight /></PaletteButton>
          <PaletteButton $h={22} aria-label="吸取颜色"><DropperIcon size={13} /></PaletteButton>
          <PaletteButton $h={16} $tone="#d0d0d0" aria-label="向上滚动"><Chevron turn="up" /></PaletteButton>
          <NoColor $size={18} $edge="#595757" aria-label="无颜色"><Cross size={16} /></NoColor>
          <SwatchList>
            {colors.map(c => <Swatch key={c} $color={c} aria-label={c} />)}
          </SwatchList>
          <PaletteButton aria-label="向下滚动"><Chevron turn="down" /></PaletteButton>
          <PaletteButton $h={14} aria-label="展开调色板"><DoubleChevron /></PaletteButton>
        </ColorPalette>
      </Workspace>

      <StatusBar>
        <StatusText $width={71}>光标位置</StatusText>
        <StatusGroup $width={86}><CaretRight /></StatusGroup>
        <StatusText>对象信息</StatusText>
        <Spacer />
        <StatusGroup $width={34}><MonitorIcon /></StatusGroup>
        <StatusGroup $width={194}>
          <BucketIcon color="#f00" />
          <NoColor $size={22} $edge="#999" aria-label="填充"><Cross size={20} /></NoColor>
          <StatusText>填充色</StatusText>
        </StatusGroup>
        <Divider />
        <StatusGroup $indent={12}>
          <PenIcon />
          <NoColor $size={22} $edge="#999" aria-label="轮廓"><Cross size={20} /></NoColor>
          <StatusText>轮廓色</StatusText>
        </StatusGroup>
        <Watermark><WatermarkLogo /><WatermarkText>好特游戏</WatermarkText></Watermark>
      </StatusBar>
    </Shell>
  );
}
